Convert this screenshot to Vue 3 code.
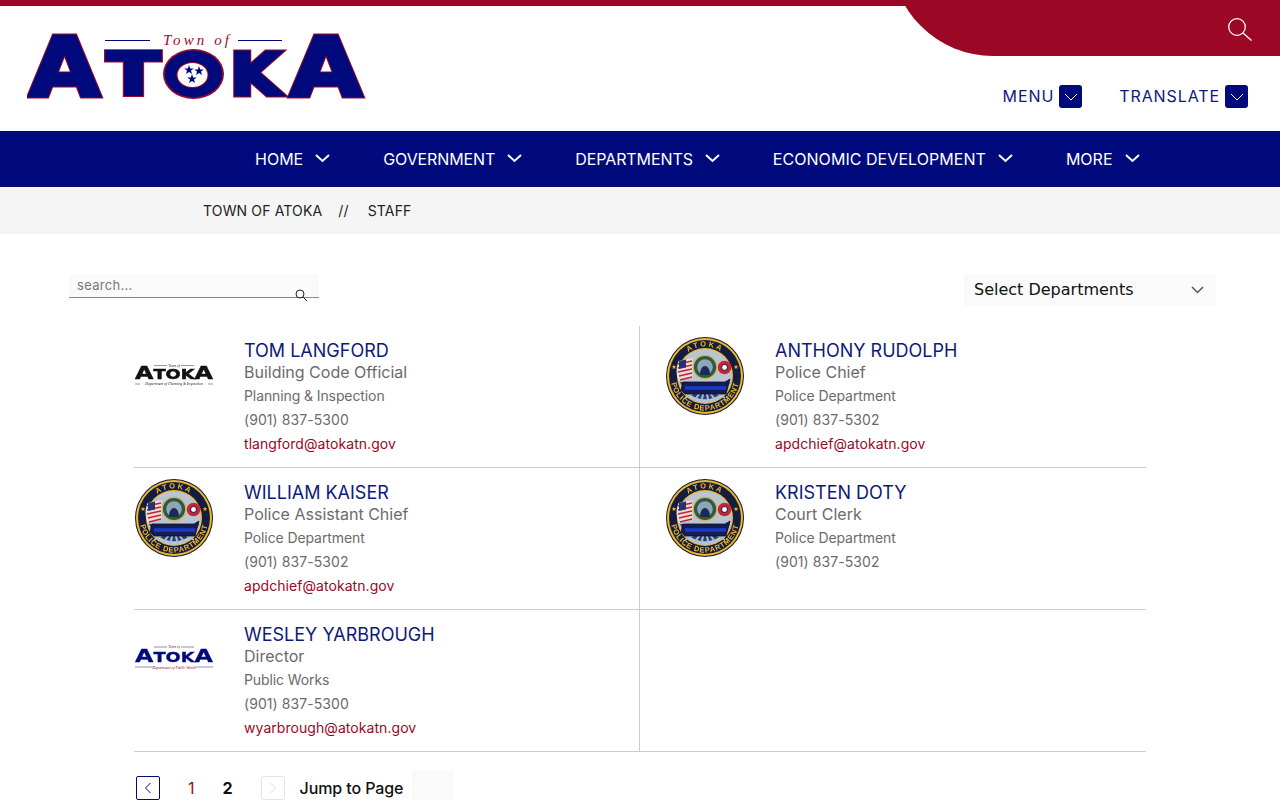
<script setup>
const navItems = ['HOME', 'GOVERNMENT', 'DEPARTMENTS', 'ECONOMIC DEVELOPMENT', 'MORE']
const staff = [
  { id: 1, name: 'TOM LANGFORD', title: 'Building Code Official', dept: 'Planning & Inspection', phone: '(901) 837-5300', email: 'tlangford@atokatn.gov', logo: 'plan' },
  { id: 2, name: 'ANTHONY RUDOLPH', title: 'Police Chief', dept: 'Police Department', phone: '(901) 837-5302', email: 'apdchief@atokatn.gov', logo: 'police' },
  { id: 3, name: 'WILLIAM KAISER', title: 'Police Assistant Chief', dept: 'Police Department', phone: '(901) 837-5302', email: 'apdchief@atokatn.gov', logo: 'police' },
  { id: 4, name: 'KRISTEN DOTY', title: 'Court Clerk', dept: 'Police Department', phone: '(901) 837-5302', email: '', logo: 'police' },
  { id: 5, name: 'WESLEY YARBROUGH', title: 'Director', dept: 'Public Works', phone: '(901) 837-5300', email: 'wyarbrough@atokatn.gov', logo: 'works' }
]
const stars = '0,-5 1.2,-1.600 4.800,-1.600 2,0.600 3,4 0,2 -3,4 -2,0.600 -4.800,-1.600 -1.200,-1.600'
</script>

<template>
  <div class="page">
    <header class="header">
      <div class="curve">
        <svg class="top-search" width="26" height="26" viewBox="0 0 26 26" fill="none" stroke="#fff" stroke-width="1.300">
          <circle cx="10" cy="10" r="8.300" />
          <path d="M16 16l8.500 7.500" />
        </svg>
      </div>
      <svg class="logo" width="340" height="70" viewBox="27 31 340 70" role="img" aria-label="Town of Atoka">
        <g class="logo-letters">
          <text class="under" x="29" y="95.500" font-size="82" textLength="71" lengthAdjust="spacingAndGlyphs">A</text>
          <text class="under" x="107" y="94.500" font-size="58" textLength="53" lengthAdjust="spacingAndGlyphs">T</text>
          <text class="under" x="230" y="94.500" font-size="58" textLength="51" lengthAdjust="spacingAndGlyphs">K</text>
          <text class="under" x="290" y="95.500" font-size="82" textLength="72" lengthAdjust="spacingAndGlyphs">A</text>
          <text class="over" x="29" y="95.500" font-size="82" textLength="71" lengthAdjust="spacingAndGlyphs">A</text>
          <text class="over" x="107" y="94.500" font-size="58" textLength="53" lengthAdjust="spacingAndGlyphs">T</text>
          <text class="over" x="230" y="94.500" font-size="58" textLength="51" lengthAdjust="spacingAndGlyphs">K</text>
          <text class="over" x="290" y="95.500" font-size="82" textLength="72" lengthAdjust="spacingAndGlyphs">A</text>
        </g>
        <ellipse cx="193.500" cy="74" rx="30.500" ry="25" fill="#9b0a2a" />
        <ellipse cx="193.500" cy="74" rx="28.800" ry="23.400" fill="#000a7c" />
        <ellipse cx="192.500" cy="75" rx="16" ry="13" fill="#9b0a2a" />
        <ellipse cx="192.500" cy="75" rx="15" ry="12" fill="#fff" />
        <g fill="#000a7c">
          <polygon :points="stars" transform="translate(189 70)" />
          <polygon :points="stars" transform="translate(199 71)" />
          <polygon :points="stars" transform="translate(192 79)" />
        </g>
        <path d="M105 40.500h45M238 40.500h44" stroke="#000a7c" stroke-width="1" />
        <text class="town" x="163" y="44.500" font-size="15" textLength="66">Town of</text>
      </svg>
      <div class="tools">
        <div class="tool">
          <span class="tool-label">MENU</span>
          <span class="tool-btn"><svg width="14" height="8" viewBox="0 0 14 8" fill="none" stroke="#fff" stroke-width="1"><path d="M1 1l6 6 6-6" /></svg></span>
        </div>
        <div class="tool">
          <span class="tool-label">TRANSLATE</span>
          <span class="tool-btn"><svg width="14" height="8" viewBox="0 0 14 8" fill="none" stroke="#fff" stroke-width="1"><path d="M1 1l6 6 6-6" /></svg></span>
        </div>
      </div>
    </header>

    <nav class="nav">
      <a v-for="item in navItems" :key="item" class="nav-item">
        <span>{{ item }}</span>
        <svg width="15" height="9" viewBox="0 0 15 9" fill="none" stroke="#fff" stroke-width="2"><path d="M1 1l6.500 6L14 1" /></svg>
      </a>
    </nav>

    <div class="crumbs">
      <span>TOWN OF ATOKA</span>
      <span class="sep">//</span>
      <span>STAFF</span>
    </div>

    <main class="main">
      <div class="filters">
        <div class="search">
          <span>search...</span>
          <svg class="search-icon" width="13" height="13" viewBox="0 0 13 13" fill="none" stroke="#222" stroke-width="1">
            <circle cx="5" cy="5" r="4" />
            <path d="M8 8l4.200 4.200" />
          </svg>
        </div>
        <div class="select">
          <span class="select-label">Select Departments</span>
          <svg width="13" height="8" viewBox="0 0 13 8" fill="none" stroke="#555" stroke-width="1.500"><path d="M1 1l5.500 5.500L12 1" /></svg>
        </div>
      </div>

      <section class="grid">
        <article v-for="person in staff" :key="person.id" class="cell">
          <div class="pic">
            <svg v-if="person.logo === 'police'" class="soft" width="80" height="80" viewBox="0 0 80 80">
              <defs>
                <path :id="`top-${person.id}`" d="M10.500 40a29.500 29.500 0 0 1 59 0" />
                <path :id="`bot-${person.id}`" d="M5.500 40a34.500 34.500 0 0 0 69 0" />
              </defs>
              <circle cx="40" cy="40" r="39" fill="#10183a" />
              <circle cx="40" cy="40" r="38" fill="#efb92c" />
              <circle cx="40" cy="40" r="36" fill="#141d3f" />
              <circle cx="40" cy="40" r="28" fill="#efb92c" />
              <circle cx="40" cy="40" r="26.800" fill="#b9c6d2" />
              <path d="M15 46a26.800 26.800 0 0 0 50 0z" fill="#2b3d78" />
              <path d="M40 50L20 62M40 50L29 65M40 50l-4 17M40 50l4 17M40 50l11 15M40 50l20 12" stroke="#a8bdd6" stroke-width="2" />
              <path d="M13.500 25l14-3v20l-14 3a27 27 0 0 1 0-20z" fill="#ecdcdc" />
              <path d="M13 28l14-3M13 32l14-3M13 36l14-3M14 40l13-3M15 44l12-3" stroke="#c8202f" stroke-width="1.500" />
              <path d="M14 25l7-1.500v8l-7 1.500z" fill="#22346e" />
              <circle cx="59.500" cy="31.500" r="6.800" fill="#d5202c" />
              <circle cx="59.500" cy="31.500" r="3.500" fill="#23336e" />
              <circle cx="59.500" cy="31.500" r="2.400" fill="#fff" />
              <circle cx="40" cy="31" r="11.700" fill="#2b5a4c" stroke="#d8b44a" stroke-width="1.200" />
              <circle cx="40" cy="31" r="7.800" fill="#8fa6b8" />
              <path d="M35 39c0-6 2.500-9 5-9s5 3 5 9z" fill="#1d2a55" />
              <path d="M18 46h42l5-3-4 15H20l-4-4z" fill="#141d50" stroke="#0b1130" stroke-width="0.800" />
              <path d="M20 52h41" stroke="#1a3ad0" stroke-width="3.500" />
              <polygon :points="stars" fill="#efb92c" transform="translate(9 31) scale(0.5)" />
              <polygon :points="stars" fill="#efb92c" transform="translate(71 31) scale(0.5)" />
              <text class="badge-text" font-size="7.500" letter-spacing="2"><textPath :href="`#top-${person.id}`" startOffset="50%" text-anchor="middle">ATOKA</textPath></text>
              <text class="badge-text" font-size="7.500" letter-spacing="0.700"><textPath :href="`#bot-${person.id}`" startOffset="50%" text-anchor="middle">POLICE DEPARTMENT</textPath></text>
            </svg>

            <svg v-else class="soft" :class="person.logo" width="80" height="80" viewBox="0 0 80 80">
              <g v-if="person.logo === 'plan'">
                <text class="mini-town" x="40" y="30.500" font-size="3.600" text-anchor="middle">Town of</text>
                <path class="mini-line" d="M20 29.500h13M47 29.500h13M1 48h5M74 48h5" />
                <text class="mini-logo" x="1" y="43" font-size="18" textLength="78" lengthAdjust="spacingAndGlyphs">A<tspan font-size="13.500">TOK</tspan>A</text>
                <text class="mini-dept" x="40" y="49" font-size="3.800" text-anchor="middle">Department of Planning &amp; Inspection</text>
              </g>
              <g v-else>
                <text class="mini-town" x="40" y="28" font-size="3.600" text-anchor="middle">Town of</text>
                <path class="mini-line" d="M20 27h13M47 27h13M1 47h18M61 47h18" />
                <text class="mini-logo" x="1" y="42" font-size="18" textLength="78" lengthAdjust="spacingAndGlyphs">A<tspan font-size="13.500">TOK</tspan>A</text>
                <text class="mini-dept" x="40" y="48.500" font-size="3.800" text-anchor="middle">Department of Public Works</text>
              </g>
            </svg>
          </div>
          <div class="info">
            <div class="name">{{ person.name }}</div>
            <div class="role">{{ person.title }}</div>
            <div class="meta">{{ person.dept }}</div>
            <div class="phone">{{ person.phone }}</div>
            <a v-if="person.email" class="mail">{{ person.email }}</a>
          </div>
        </article>
        <div class="cell empty"></div>
      </section>

      <div class="pager">
        <span class="page-btn active"><svg width="8" height="12" viewBox="0 0 8 12" fill="none" stroke="#000a7c" stroke-width="1"><path d="M6.500 1L1.500 6l5 5" /></svg></span>
        <span class="num current">1</span>
        <span class="num bold">2</span>
        <span class="page-btn off"><svg width="8" height="12" viewBox="0 0 8 12" fill="none" stroke="#ddd" stroke-width="1"><path d="M1.500 1l5 5-5 5" /></svg></span>
        <span class="jump">Jump to Page</span>
        <span class="jump-box"></span>
      </div>
    </main>
  </div>
</template>

<style>
html, body { margin: 0; background: #fff; overflow: hidden; }
</style>

<style scoped>
.page {
  width: 1280px;
  height: 800px;
  overflow: hidden;
  font-family: Inter, "Liberation Sans", sans-serif;
  color: #222;
}
.header {
  position: relative;
  box-sizing: border-box;
  height: 131px;
  border-top: 6px solid #9b0724;
  display: flex;
  justify-content: space-between;
  align-items: flex-start;
  padding: 25px 32px 0 27px;
}
.curve {
  position: absolute;
  top: -52px;
  right: 0;
  width: 389px;
  height: 102px;
  background: #9b0724;
  border-bottom-left-radius: 102px;
}
.top-search { position: absolute; top: 63px; right: 27px; }
.logo { display: block; }
.logo-letters text { font-family: "DejaVu Sans", sans-serif; font-weight: 700; }
.under { fill: #9b0a2a; stroke: #9b0a2a; stroke-width: 5px; stroke-linejoin: miter; }
.over { fill: #000a7c; stroke: #000a7c; stroke-width: 3.200px; stroke-linejoin: miter; }
.town { font-family: "Liberation Serif", serif; font-style: italic; fill: #9b0a2a; }
.tools {
  display: flex;
  gap: 37px;
  margin-top: 54px;
}
.tool {
  display: flex;
  align-items: center;
  gap: 5px;
  font-size: 16px;
  letter-spacing: 0.900px;
  color: #0d1a7a;
}
.tool-label { margin-top: -1px; }
.tool-btn {
  width: 23px;
  height: 23px;
  border-radius: 3px;
  background: #000a7c;
  display: flex;
  align-items: center;
  justify-content: center;
}
.nav {
  height: 56px;
  background: #000a7c;
  display: flex;
  align-items: center;
  gap: 53px;
  padding-left: 255px;
}
.nav-item {
  display: flex;
  align-items: center;
  gap: 12px;
  color: #fff;
  font-size: 16px;
}
.nav-item:nth-child(2), .nav-item:nth-child(3) { letter-spacing: -0.100px; }
.nav-item:nth-child(4) { letter-spacing: 0.050px; }
.nav-item svg { margin-top: -2px; }
.crumbs {
  height: 47px;
  background: #f5f5f5;
  display: flex;
  align-items: center;
  padding-left: 203px;
  font-size: 14px;
  letter-spacing: 0.150px;
  color: #222;
}
.sep { margin: 0 19px 0 16px; }
.main { padding-top: 40px; }
.filters {
  display: flex;
  justify-content: space-between;
  align-items: flex-start;
  padding: 0 64px 0 69px;
  height: 52px;
}
.search {
  position: relative;
  box-sizing: border-box;
  width: 250px;
  height: 24px;
  background: #fafafa;
  border-bottom: 1px solid #8a8a8a;
  padding: 3px 8px;
  font-size: 13px;
  letter-spacing: 0.300px;
  color: #777;
}
.search-icon { position: absolute; right: 11px; top: 15px; }
.select {
  box-sizing: border-box;
  width: 252px;
  height: 32px;
  background: #fafafa;
  display: flex;
  align-items: center;
  justify-content: space-between;
  padding: 0 12px 0 10px;
  font-family: "DejaVu Sans", sans-serif;
  font-size: 16px;
  color: #111;
}
.select-label { margin-top: -2px; }
.grid {
  width: 1012px;
  margin: 0 auto;
  display: grid;
  grid-template-columns: 506px 506px;
  grid-auto-rows: 142px;
}
.cell {
  box-sizing: border-box;
  display: flex;
  padding-top: 11px;
  border-bottom: 1px solid #ccc;
}
.cell:nth-child(odd) { border-right: 1px solid #ccc; }
.cell:nth-child(even) { padding-left: 25px; }
.pic { width: 80px; margin: -1px 30px 0 0; flex: none; }
.soft { display: block; filter: blur(0.350px); }
.info { min-width: 0; padding-top: 3px; }
.name { font-size: 18px; line-height: 21px; color: #0d1a7a; }
.role { font-size: 16px; line-height: 22px; color: #6b6b6b; margin-bottom: 1px; }
.meta { font-size: 14px; line-height: 24px; letter-spacing: -0.100px; color: #6b6b6b; }
.phone { font-size: 14px; line-height: 24px; letter-spacing: 0.070px; color: #6b6b6b; }
.mail { display: block; font-size: 14px; line-height: 24px; letter-spacing: 0.060px; color: #9b0724; }
.badge-text { font-family: "Liberation Sans", sans-serif; font-weight: 700; fill: #efb92c; }
.mini-town, .mini-dept { font-family: "Liberation Serif", serif; font-style: italic; }
.mini-logo { font-family: "DejaVu Sans", sans-serif; font-weight: 700; }
.plan .mini-logo { fill: #111; stroke: #111; stroke-width: 0.500px; }
.plan .mini-town, .plan .mini-dept { fill: #222; }
.plan .mini-line { stroke: #333; stroke-width: 0.500px; }
.works .mini-logo { fill: #000a7c; stroke: #000a7c; stroke-width: 0.300px; }
.works .mini-town, .works .mini-dept { fill: #9b0a2a; }
.works .mini-line { stroke: #1a1a80; stroke-width: 0.500px; }
.pager {
  display: flex;
  align-items: center;
  height: 30px;
  margin-top: 18px;
  padding-left: 136px;
  font-size: 16px;
}
.page-btn {
  box-sizing: border-box;
  width: 24px;
  height: 24px;
  margin-top: 6px;
  border-radius: 2px;
  display: flex;
  align-items: center;
  justify-content: center;
}
.active { border: 1px solid #000a7c; }
.off { border: 1px solid #e5e5e5; }
.num { margin-top: 6px; }
.current { color: #9b0724; margin-left: 28px; }
.bold { font-weight: 700; color: #111; margin-left: 28px; margin-right: 28px; }
.jump { margin: 6px 0 0 15px; font-weight: 500; letter-spacing: -0.100px; color: #111; }
.jump-box { width: 41px; height: 30px; margin-left: 9px; background: #fafafa; }
</style>
